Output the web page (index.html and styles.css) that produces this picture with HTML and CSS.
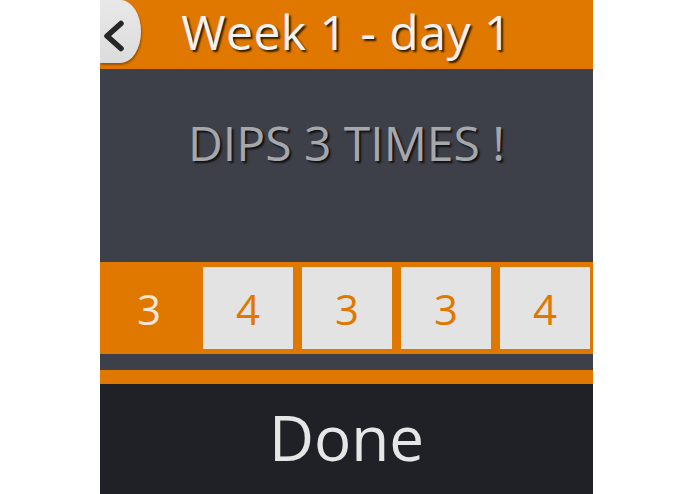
FILE: index.html
```html
<!DOCTYPE html>
<html>
<head>
<meta charset="utf-8">
<link rel="stylesheet" href="styles.css">
</head>
<body>
<div class="app">
  <header class="header">
    <div class="back">
      <svg class="chev" viewBox="0 0 24 32" width="24" height="32">
        <path d="M19 3.5 L5 16 L19 28.5" fill="none" stroke="#262626" stroke-width="5.5" stroke-linecap="round" stroke-linejoin="round"/>
      </svg>
    </div>
    <h1 class="title">Week 1 - day 1</h1>
  </header>
  <section class="exercise">
    <div class="ex-name">DIPS 3 TIMES !</div>
  </section>
  <div class="sets">
    <div class="cell active">3</div>
    <div class="cell">4</div>
    <div class="cell">3</div>
    <div class="cell">3</div>
    <div class="cell">4</div>
  </div>
  <div class="spacer"></div>
  <div class="stripe"></div>
  <div class="done">Done</div>
</div>
</body>
</html>
```

FILE: styles.css
```css
html, body {
  margin: 0;
  padding: 0;
  background: #ffffff;
}
body {
  font-family: "Open Sans", "DejaVu Sans", sans-serif;
}
.app {
  width: 493px;
  height: 494px;
  margin-left: 100px;
  display: flex;
  flex-direction: column;
  overflow: hidden;
}
.header {
  height: 69px;
  background: #e07800;
  position: relative;
  display: flex;
  align-items: center;
  justify-content: center;
  overflow: hidden;
}
.back {
  position: absolute;
  left: 0;
  top: 0;
  width: 41px;
  height: 63px;
  box-sizing: border-box;
  padding-left: 2px;
  border-radius: 0 50% 50% 0 / 0 50% 50% 0;
  background: linear-gradient(#e8e8e8, #dcdcdc);
  box-shadow: 1px 2px 2px rgba(0,0,0,0.3);
  display: flex;
  align-items: center;
}
.chev {
  margin-top: 9px;
}
.title {
  margin: -6px 0 0 0;
  font-weight: 400;
  font-size: 48px;
  letter-spacing: 0.5px;
  line-height: 1;
  color: #f2f2f2;
  text-shadow: 2px 2px 2px rgba(0,0,0,0.8);
}
.exercise {
  height: 193px;
  background: #3d4049;
  display: flex;
  justify-content: center;
  box-sizing: border-box;
  padding-top: 50px;
}
.ex-name {
  font-size: 48px;
  line-height: 1;
  color: #a6a7ab;
  text-shadow: 2px 2px 2px rgba(0,0,0,0.75);
}
.sets {
  height: 92px;
  background: #e07800;
  box-sizing: border-box;
  padding: 5px 3px 5px 4px;
  display: flex;
  gap: 9px;
}
.cell {
  width: 90px;
  height: 82px;
  background: #e3e3e3;
  color: #e07800;
  font-size: 42px;
  display: flex;
  align-items: center;
  justify-content: center;
}
.cell.active {
  background: #e07800;
  color: #f4e6d6;
}
.spacer {
  height: 16px;
  background: #3d4049;
}
.stripe {
  height: 14px;
  background: #e07800;
}
.done {
  flex: 1;
  background: #202126;
  color: #e6e6e6;
  font-size: 62px;
  display: flex;
  align-items: center;
  justify-content: center;
  line-height: 1;
  padding-bottom: 4px;
}
```
